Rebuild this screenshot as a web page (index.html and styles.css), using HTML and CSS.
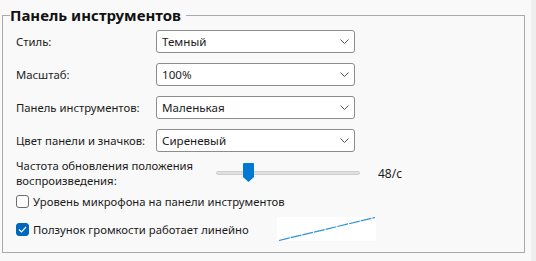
FILE: index.html
```html
<!DOCTYPE html>
<html lang="ru">

<head>
    <meta charset="UTF-8">
    <meta name="viewport" content="width=device-width, initial-scale=1.0">
    <title>Панель инструментов</title>

    <link rel="stylesheet" href="styles.css">
</head>

<body>
    <div class="page">
        <fieldset class="group">
            <legend>Панель инструментов</legend>

            <div class="row">
                <label>Стиль:</label>
                <div class="select"><span>Темный</span>
                    <svg width="9" height="5" viewBox="0 0 9 5"><path d="M0.5 0.5 L4.5 4.5 L8.5 0.5" fill="none" stroke="#555" stroke-width="1"/></svg>
                </div>
            </div>
            <div class="row">
                <label>Масштаб:</label>
                <div class="select"><span>100%</span>
                    <svg width="9" height="5" viewBox="0 0 9 5"><path d="M0.5 0.5 L4.5 4.5 L8.5 0.5" fill="none" stroke="#555" stroke-width="1"/></svg>
                </div>
            </div>
            <div class="row">
                <label>Панель инструментов:</label>
                <div class="select"><span>Маленькая</span>
                    <svg width="9" height="5" viewBox="0 0 9 5"><path d="M0.5 0.5 L4.5 4.5 L8.5 0.5" fill="none" stroke="#555" stroke-width="1"/></svg>
                </div>
            </div>
            <div class="row">
                <label>Цвет панели и значков:</label>
                <div class="select"><span>Сиреневый</span>
                    <svg width="9" height="5" viewBox="0 0 9 5"><path d="M0.5 0.5 L4.5 4.5 L8.5 0.5" fill="none" stroke="#555" stroke-width="1"/></svg>
                </div>
            </div>

            <div class="slider-row">
                <label class="slider-label">Частота обновления положения воспроизведения:</label>
                <div class="slider">
                    <div class="track"></div>
                    <svg class="thumb" width="11" height="19" viewBox="0 0 11 19"><path d="M0 1 Q0 0 1 0 L10 0 Q11 0 11 1 L11 14 L5.5 19 L0 14 Z" fill="#0078d4"/></svg>
                </div>
                <span class="value">48/с</span>
            </div>

            <div class="check-row">
                <span class="box"></span>
                <span>Уровень микрофона на панели инструментов</span>
            </div>
            <div class="check-row">
                <span class="box checked">
                    <svg width="9" height="7" viewBox="0 0 9 7"><path d="M1 3.5 L3.5 6 L8 1" fill="none" stroke="#fff" stroke-width="1.2"/></svg>
                </span>
                <span>Ползунок громкости работает линейно</span>
                <div class="curve">
                    <svg width="99" height="24" viewBox="0 0 99 24"><line x1="2" y1="23.5" x2="98" y2="0.5" stroke="#2f95d6" stroke-width="1.2" stroke-dasharray="11 1"/></svg>
                </div>
            </div>
        </fieldset>
        <div class="scrollbar"></div>
    </div>
</body>

</html>
```

FILE: styles.css
```css
* {
    margin: 0;
    padding: 0;
    box-sizing: border-box;
}

body {
    background-color: #f9f9f9;
    font-family: "Noto Sans", "Open Sans", sans-serif;
    font-size: 11.3px;
    color: #1b1b1b;
    width: 536px;
    height: 261px;
    overflow: hidden;
}

.page {
    display: flex;
    height: 261px;
}

.group {
    margin: 5px 0 0 2px;
    width: 523px;
    height: 248px;
    border: 1px solid #a9a9a9;
    padding: 4px 12px 0 13px;
}

.group legend {
    font-size: 15px;
    font-weight: bold;
    padding: 0 5px 0 0;
    margin-left: -6px;
    line-height: 21px;
    color: #111;
}

.scrollbar {
    margin-left: 6px;
    width: 5px;
    background-color: #efefef;
}

.row {
    display: flex;
    align-items: center;
    height: 23px;
    margin-bottom: 10px;
}

.row label {
    width: 140px;
}

.select {
    width: 199px;
    height: 23px;
    background-color: #fff;
    border: 1px solid #8c8c8c;
    border-radius: 3px;
    display: flex;
    align-items: center;
    justify-content: space-between;
    padding: 0 5px 0 5px;
    font-size: 11.6px;
}

.slider-row {
    display: flex;
    align-items: center;
    margin-top: -5px;
    height: 32px;
}

.slider-label {
    width: 200px;
    line-height: 15px;
}

.slider {
    position: relative;
    width: 144px;
    height: 20px;
    display: flex;
    align-items: center;
}

.track {
    width: 100%;
    height: 4px;
    background-color: #e0e0e0;
    border: 1px solid #cfcfcf;
    border-radius: 2px;
}

.thumb {
    position: absolute;
    left: 27px;
    top: 0;
}

.value {
    margin-left: 18px;
    font-size: 12px;
}

.check-row {
    display: flex;
    align-items: center;
    height: 22px;
    margin-top: 1px;
}

.check-row + .check-row {
    margin-top: 3px;
    height: 28px;
}

.box {
    width: 13px;
    height: 13px;
    border: 1px solid #6b6b6b;
    border-radius: 3px;
    background-color: #fff;
    margin-right: 4px;
    display: flex;
    align-items: center;
    justify-content: center;
}

.box.checked {
    background-color: #0067c0;
    border-color: #0067c0;
}

.curve {
    margin-left: 28px;
    width: 99px;
    height: 24px;
    background-color: #fff;
}
```
